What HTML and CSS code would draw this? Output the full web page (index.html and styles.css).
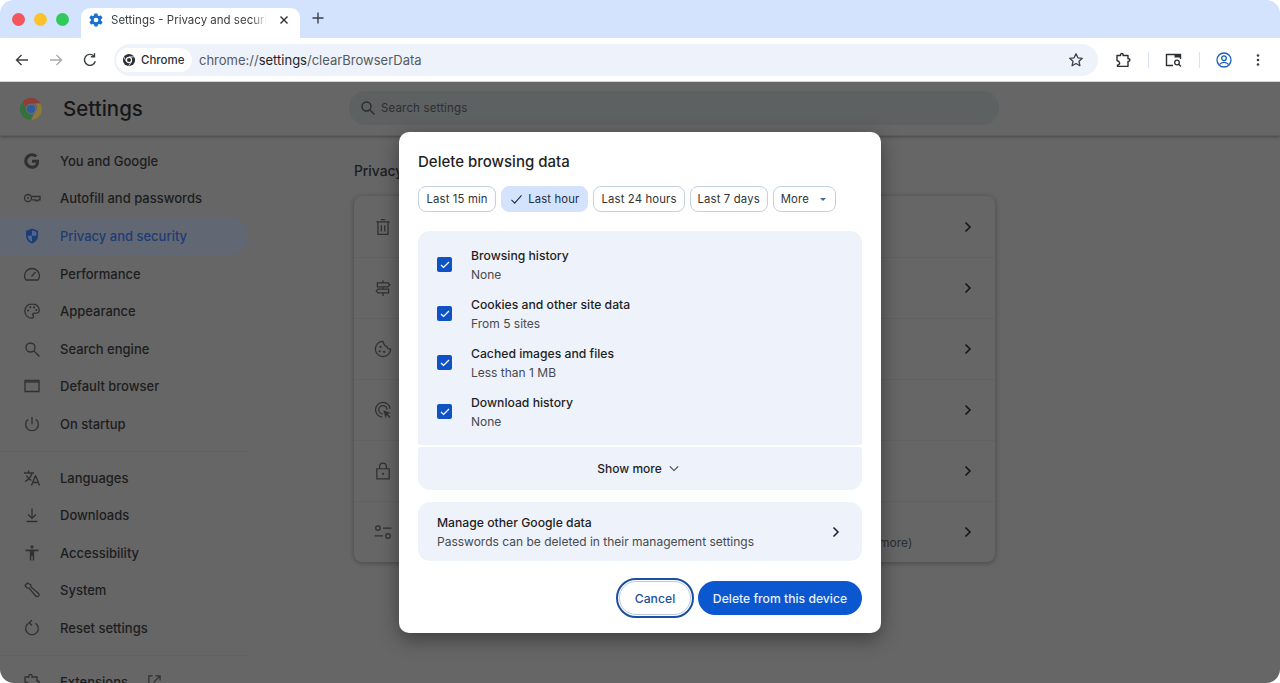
FILE: index.html
```html
<!DOCTYPE html>
<html lang="en">
  <head>
    <meta charset="UTF-8" />
    <title>Settings - Privacy and security</title>
    <link rel="stylesheet" href="styles.css">
  </head>
  <body>
    <div class="window">
      <div class="tabstrip">
        <div class="lights"><i class="red"></i><i class="yellow"></i><i class="green"></i></div>
        <div class="tab">
          <svg class="gear" viewBox="0 0 24 24" width="16" height="16"><path fill="#1a6fd0" d="M19.4 13c.1-.3.1-.7.1-1s0-.7-.1-1l2.1-1.6c.2-.2.2-.4.1-.6l-2-3.5c-.1-.2-.4-.3-.6-.2l-2.5 1c-.5-.4-1.100-.7-1.700-1l-.4-2.600c0-.2-.2-.4-.5-.4h-4c-.2 0-.4.2-.5.400l-.4 2.600c-.6.300-1.200.6-1.700 1l-2.500-1c-.2-.1-.5 0-.6.200l-2 3.500c-.1.200-.1.500.1.600L4.500 11c-.1.300-.1.700-.1 1s0 .7.100 1l-2.100 1.600c-.2.200-.2.400-.1.600l2 3.500c.1.200.4.300.6.200l2.500-1c.5.400 1.100.7 1.700 1l.4 2.600c.1.200.3.400.5.400h4c.3 0 .5-.2.500-.4l.4-2.600c.6-.3 1.200-.6 1.700-1l2.500 1c.2.100.5 0 .6-.2l2-3.500c.1-.2.100-.5-.1-.6zM12 15.500a3.500 3.500 0 1 1 0-7 3.500 3.500 0 0 1 0 7z"/></svg>
          <span class="tab-title">Settings - Privacy and securit</span>
          <svg class="tab-close" viewBox="0 0 10 10" width="10" height="10"><path d="M1.500 1.500l7 7M8.500 1.500l-7 7" stroke="#2b2f33" stroke-width="1.400"/></svg>
        </div>
        <svg class="new-tab" viewBox="0 0 12 12" width="12" height="12"><path d="M6 .5v11M.5 6h11" stroke="#3c4043" stroke-width="1.400"/></svg>
      </div>

      <div class="toolbar">
        <button class="tool"><svg viewBox="0 0 16 16" width="16" height="16"><path d="M14 8H2.500M7.500 3L2.500 8l5 5" fill="none" stroke="#3c4043" stroke-width="1.400"/></svg></button>
        <button class="tool"><svg viewBox="0 0 16 16" width="16" height="16"><path d="M2 8h11.500M8.500 3l5 5-5 5" fill="none" stroke="#a8abae" stroke-width="1.400"/></svg></button>
        <button class="tool"><svg viewBox="0 0 16 16" width="16" height="16"><path d="M13.300 9.300A5.500 5.500 0 1 1 11.900 4M12.500 1.200v3.600H8.900" fill="none" stroke="#3c4043" stroke-width="1.400"/></svg></button>
        <div class="omnibox">
          <div class="chip">
            <svg viewBox="0 0 16 16" width="14" height="14"><circle cx="8" cy="8" r="7" fill="#2b2f33"/><circle cx="8" cy="8" r="3.600" fill="#fff"/><circle cx="8" cy="8" r="2.300" fill="#2b2f33"/><path d="M8 4.400h6.400M5 9.800L1.900 4.200M10.800 10L7.500 15" stroke="#fff" stroke-width=".9"/></svg>
            <span>Chrome</span>
          </div>
          <div class="url">chrome://<b>settings</b>/clearBrowserData</div>
          <svg class="star" viewBox="0 0 16 16" width="16" height="16"><path d="M8 1.800l1.900 4 4.400.5-3.300 3 .9 4.400L8 11.500l-3.900 2.200.9-4.400-3.300-3 4.400-.5z" fill="none" stroke="#3c4043" stroke-width="1.300" stroke-linejoin="round"/></svg>
        </div>
        <div class="actions">
          <svg class="puzzle" viewBox="0 0 16 16" width="16" height="16"><path d="M2 3.500h3.500V2.800a1.300 1.300 0 0 1 2.600 0v.7H13v3.300h.6a1.300 1.300 0 0 1 0 2.600H13v5H2.500v-1.200l1.300-.6c1.100-.9 1.100-2.300 0-3.100L2 8.600z" fill="none" stroke="#2b2f33" stroke-width="1.400" stroke-linejoin="round"/></svg>
          <i class="sep"></i>
          <svg class="tabsearch" viewBox="0 0 18 16" width="18" height="16"><path d="M8 13.500H1.500v-11h14V7" fill="none" stroke="#2b2f33" stroke-width="1.400"/><rect x="9.500" y="2" width="6.500" height="3.500" fill="#2b2f33"/><circle cx="12" cy="10.500" r="2.300" fill="none" stroke="#2b2f33" stroke-width="1.300"/><path d="M13.700 12.300l2.300 2.300" stroke="#2b2f33" stroke-width="1.400"/></svg>
          <i class="sep"></i>
          <svg class="profile" viewBox="0 0 16 16" width="16" height="16"><circle cx="8" cy="8" r="7" fill="none" stroke="#1a5fc0" stroke-width="1.300"/><circle cx="8" cy="6.200" r="2.300" fill="none" stroke="#1a5fc0" stroke-width="1.300"/><path d="M3.500 12.500c1-1.600 2.700-2.200 4.500-2.200s3.500.6 4.500 2.200" fill="none" stroke="#1a5fc0" stroke-width="1.300"/></svg>
          <svg class="dots" viewBox="0 0 4 14" width="4" height="14"><circle cx="2" cy="2.500" r="1.300" fill="#3c4043"/><circle cx="2" cy="7" r="1.300" fill="#3c4043"/><circle cx="2" cy="11.500" r="1.300" fill="#3c4043"/></svg>
        </div>
      </div>

      <div class="page">
        <header class="top">
          <div class="brand">
            <svg viewBox="0 0 22 22" width="22" height="22"><path d="M11 0a11 11 0 0 1 9.500 5.500H11a5.500 5.500 0 0 0-5.100 3.400L2.400 4.100A11 11 0 0 1 11 0z" fill="#8f3d36"/><path d="M20.500 5.500A11 11 0 0 1 11 22l4.600-8A5.500 5.500 0 0 0 15 5.500z" fill="#8c7a3c"/><path d="M2.400 4.100L6.800 12a5 5 0 0 0 5.900 4.300L11 22A11 11 0 0 1 2.400 4.100z" fill="#35703f"/><circle cx="11" cy="11" r="5" fill="#6b6b6b"/><circle cx="11" cy="11" r="4" fill="#2f5a9e"/></svg>
            <h1>Settings</h1>
          </div>
          <div class="search">
            <svg viewBox="0 0 16 16" width="16" height="16"><circle cx="6.500" cy="6.500" r="4.500" fill="none" stroke="#2a2c2e" stroke-width="1.400"/><path d="M10 10l4.500 4.500" stroke="#2a2c2e" stroke-width="1.500"/></svg>
            <span>Search settings</span>
          </div>
        </header>

        <div class="content">
          <nav class="sidebar">
            <a><svg viewBox="0 0 18 18"><path d="M16 9.200c0-.5 0-1-.1-1.500H9v3h4.100c-.4 1.700-1.900 3-4.100 3a4.700 4.700 0 0 1 0-9.400c1.200 0 2.300.4 3.100 1.200l2.200-2.200A7.800 7.800 0 0 0 9 1.200a7.800 7.800 0 1 0 0 15.600c4.300 0 7-3 7-7.600z" fill="#2e3032"/></svg>You and Google</a>
            <a><svg viewBox="0 0 18 18"><circle cx="5" cy="9" r="3.500"/><circle cx="5" cy="9" r=".9" fill="#2e3032"/><path d="M8.500 7.500H17v3.300h-2v1h-2.500v-1H8.500"/></svg>Autofill and passwords</a>
            <a class="on"><svg viewBox="0 0 18 18"><path class="fill" d="M9 1.500l6 2.300v4.600c0 3.800-2.500 6.900-6 8.100-3.500-1.200-6-4.300-6-8.100V3.800z"/><path d="M9 3.200l4.400 1.700v3.900H9zM9 8.800H4.600c.2 2.700 2 5 4.400 6z" fill="#4f6690"/></svg>Privacy and security</a>
            <a><svg viewBox="0 0 18 18"><path d="M3 15h12c1.200-1.500 1.500-2.900 1.500-4.500A7.500 7.500 0 0 0 9 3.500a7.500 7.500 0 0 0-7.500 7c0 1.600.3 3 1.500 4.500z"/><path d="M8.500 11.500l4-4.500"/></svg>Performance</a>
            <a><svg viewBox="0 0 18 18"><path d="M9 1.800a7.200 7.200 0 0 0 0 14.400c1 0 1.500-.7 1.500-1.400 0-1-.8-1.300-.8-2.200 0-.9.700-1.400 1.500-1.400h1.600c2 0 3.400-1.300 3.400-3.200 0-3.700-3.200-6.200-7.200-6.200z"/><g><circle cx="5" cy="8.500" r="1"/><circle cx="7.300" cy="5.300" r="1"/><circle cx="11" cy="5.300" r="1"/><circle cx="13.300" cy="8" r="1"/></g></svg>Appearance</a>
            <a><svg viewBox="0 0 18 18"><circle cx="7.500" cy="7.500" r="4.500"/><path d="M11 11l5.500 5.500"/></svg>Search engine</a>
            <a><svg viewBox="0 0 18 18"><path d="M2 3.500h14v11H2z"/><path d="M2 5h14" stroke-width="2.500"/></svg>Default browser</a>
            <a><svg viewBox="0 0 18 18"><path d="M9 2v7.500M5.300 4.300a6.300 6.300 0 1 0 7.400 0"/></svg>On startup</a>
            <hr>
            <a><svg viewBox="0 0 18 18"><path d="M1 4h10M5.500 1.500V4M9 4c-.8 3.500-3.500 6.800-7 8.500M3.500 6.500c1 2.500 3 4.200 5 5M8.500 16.500l3.700-9.500h.6l3.700 9.500M10 13.500h5"/></svg>Languages</a>
            <a><svg viewBox="0 0 18 18"><path d="M9 2.500v9.500M5 8.500L9 12.300l4-3.800M3.500 15.500h11"/></svg>Downloads</a>
            <a><svg viewBox="0 0 18 18"><circle cx="9" cy="2.800" r="1.600" fill="#2e3032"/><path class="fill" d="M2.500 5.500h13v1.800h-4.300v9.200H9.700v-4.500H8.300v4.500H6.800V7.300H2.500z"/></svg>Accessibility</a>
            <a><svg viewBox="0 0 18 18"><path d="M4.500 2L2 4.500 4 7l2 .2L12.700 15c.8.900 2.100.9 2.800.1.800-.7.700-2-.1-2.800L8 6l-.2-2.200z"/></svg>System</a>
            <a><svg viewBox="0 0 18 18"><path d="M5.500 4.300a6.300 6.300 0 1 0 7 0M9 1L6.200 3.800 9 6.500"/></svg>Reset settings</a>
            <hr>
            <a><svg viewBox="0 0 18 18"><path d="M2 4h4V2.800a1.500 1.500 0 0 1 3 0V4h5v4h.8a1.500 1.500 0 0 1 0 3H14v5H2.500v-3c1.500 0 2.500-.9 2.500-2s-1-2-2.500-2H2z"/></svg>Extensions<svg class="ext" viewBox="0 0 16 16"><path d="M6 2H2v12h12v-4M9 2h5v5M14 2L7 9"/></svg></a>
          </nav>

          <main class="main">
            <h2>Privacy</h2>
            <section class="card">
              <div class="row"><svg viewBox="0 0 16 16"><path d="M3.500 4v10.500h9V4M2 3.500h12M6 1.500h4M6.500 6.500v5.500M9.500 6.500v5.500"/></svg><svg class="go" viewBox="0 0 10 12"><path d="M2.500 1.500L7 6l-4.500 4.500"/></svg></div>
              <div class="row"><svg viewBox="0 0 16 16"><path d="M8 1v2.500M8 7v2M8 12.500V15M3 3.500h9.500L14 5.200l-1.500 1.700H3zM13 9H3.500L2 10.700l1.500 1.700H13z"/></svg><svg class="go" viewBox="0 0 10 12"><path d="M2.500 1.500L7 6l-4.500 4.500"/></svg></div>
              <div class="row"><svg viewBox="0 0 16 16"><path d="M8 1.200a6.800 6.800 0 1 0 6.800 6.800c-1.700.2-3-.7-3.300-2.200C10 5.700 8.700 4 8 1.200z"/><g><circle cx="5.700" cy="6" r="1"/><circle cx="5" cy="10" r="1"/><circle cx="9" cy="10.500" r="1"/></g></svg><svg class="go" viewBox="0 0 10 12"><path d="M2.500 1.500L7 6l-4.500 4.500"/></svg></div>
              <div class="row"><svg viewBox="0 0 16 16"><path d="M7.200 14.400A6.600 6.600 0 1 1 14.500 7M7.800 11.500a3.700 3.700 0 1 1 3.800-3.800"/><path class="fill" d="M8 8l7.500 2.600-3 1.200 2.400 2.500-1 1-2.500-2.500-1.100 3z"/></svg><svg class="go" viewBox="0 0 10 12"><path d="M2.500 1.500L7 6l-4.500 4.500"/></svg></div>
              <div class="row"><svg viewBox="0 0 16 16"><path d="M2.500 6h11v9h-11zM5 6V4a3 3 0 0 1 6 0v2"/><circle cx="8" cy="10.500" r="1" fill="#2e3032"/></svg><svg class="go" viewBox="0 0 10 12"><path d="M2.500 1.500L7 6l-4.500 4.500"/></svg></div>
              <div class="row"><svg viewBox="0 0 16 16"><circle cx="3.500" cy="4.500" r="2"/><path d="M8 4.500h7.500M.5 11.500H8"/><circle cx="12.500" cy="11.500" r="2"/></svg><span class="more">more)</span><svg class="go" viewBox="0 0 10 12"><path d="M2.500 1.500L7 6l-4.500 4.500"/></svg></div>
            </section>
          </main>
        </div>

        <div class="dialog">
          <h3>Delete browsing data</h3>
          <div class="chips">
            <span>Last 15 min</span>
            <span class="picked"><svg viewBox="0 0 14 12" width="13" height="11"><path d="M1.500 6.500l3.500 3.500 7.500-8.500" fill="none" stroke="#1f2b3d" stroke-width="1.200"/></svg>Last hour</span>
            <span>Last 24 hours</span>
            <span>Last 7 days</span>
            <span class="drop">More<i></i></span>
          </div>
          <div class="types">
            <label class="type"><b class="box"><svg viewBox="0 0 12 10" width="10" height="8"><path d="M1 5l3.200 3L11 1.200" fill="none" stroke="#fff" stroke-width="1.600"/></svg></b><span><strong>Browsing history</strong><small>None</small></span></label>
            <label class="type"><b class="box"><svg viewBox="0 0 12 10" width="10" height="8"><path d="M1 5l3.200 3L11 1.200" fill="none" stroke="#fff" stroke-width="1.600"/></svg></b><span><strong>Cookies and other site data</strong><small>From 5 sites</small></span></label>
            <label class="type"><b class="box"><svg viewBox="0 0 12 10" width="10" height="8"><path d="M1 5l3.200 3L11 1.200" fill="none" stroke="#fff" stroke-width="1.600"/></svg></b><span><strong>Cached images and files</strong><small>Less than 1 MB</small></span></label>
            <label class="type"><b class="box"><svg viewBox="0 0 12 10" width="10" height="8"><path d="M1 5l3.200 3L11 1.200" fill="none" stroke="#fff" stroke-width="1.600"/></svg></b><span><strong>Download history</strong><small>None</small></span></label>
          </div>
          <div class="show-more">Show more<svg viewBox="0 0 12 8" width="10" height="7"><path d="M1 1.500l5 5 5-5" fill="none" stroke="#3c4043" stroke-width="1.300"/></svg></div>
          <div class="manage">
            <span><strong>Manage other Google data</strong><small>Passwords can be deleted in their management settings</small></span>
            <svg viewBox="0 0 10 12" width="10" height="12"><path d="M2.500 1.500L7 6l-4.500 4.500" fill="none" stroke="#1f1f1f" stroke-width="1.500"/></svg>
          </div>
          <div class="buttons">
            <button class="cancel">Cancel</button>
            <button class="confirm">Delete from this device</button>
          </div>
        </div>
      </div>
    </div>
  </body>
</html>
```

FILE: styles.css
```css
* {
  box-sizing: border-box;
}
html, body {
  margin: 0;
  height: 683px;
  overflow: hidden;
  background: #fff;
}
body {
  font-family: Inter, "Liberation Sans", sans-serif;
  color: #1f1f1f;
}
svg {
  display: block;
  flex-shrink: 0;
}

.window {
  height: 683px;
  display: flex;
  flex-direction: column;
}

/* Barra de pestañas */
.tabstrip {
  height: 38px;
  flex-shrink: 0;
  display: flex;
  align-items: flex-end;
  background: #d3e3fd;
  border-radius: 14px 14px 0 0;
  padding-left: 12px;
}
.lights {
  display: flex;
  gap: 9px;
  align-self: flex-start;
  padding-top: 13px;
  width: 69px;
}
.lights i {
  width: 13px;
  height: 13px;
  border-radius: 50%;
}
.lights .red { background: #f4565c; }
.lights .yellow { background: #fcc32b; }
.lights .green { background: #31c85c; }
.tab {
  width: 219px;
  height: 31px;
  margin-bottom: -1px;
  padding: 0 11px 8px 7px;
  display: flex;
  align-items: center;
  background: #fff;
  border-radius: 9px 9px 0 0;
}
.tab-title {
  flex: 1;
  margin-left: 7px;
  font-size: 11.500px;
  color: #3c4043;
  white-space: nowrap;
  overflow: hidden;
  -webkit-mask-image: linear-gradient(90deg, #000 90%, transparent 100%);
  mask-image: linear-gradient(90deg, #000 90%, transparent 100%);
}
.tab-close {
  margin-left: 12px;
}
.new-tab {
  margin: 0 0 14px 12px;
}

/* Barra de herramientas */
.toolbar {
  height: 44px;
  flex-shrink: 0;
  display: flex;
  align-items: center;
  padding: 0 14px;
  background: #fff;
  border-bottom: 1px solid #d2d3d5;
  border-radius: 10px 10px 0 0;
}
.tool {
  width: 34px;
  height: 30px;
  padding: 0;
  display: flex;
  align-items: center;
  justify-content: flex-start;
  background: none;
  border: 0;
}
.omnibox {
  width: 984px;
  height: 32px;
  flex-shrink: 0;
  margin-left: -2px;
  padding: 0 14px 0 2px;
  display: flex;
  align-items: center;
  background: #edf2fb;
  border-radius: 16px;
}
.chip {
  height: 24px;
  width: 76px;
  padding-left: 6px;
  display: flex;
  align-items: center;
  gap: 5px;
  font-size: 11.500px;
  font-weight: 500;
  color: #2b2f33;
  background: #fff;
  border-radius: 12px;
}
.url {
  flex: 1;
  margin-left: 7px;
  font-size: 13px;
  color: #555a60;
}
.url b {
  font-weight: 400;
  color: #1f1f1f;
}
.actions {
  display: flex;
  align-items: center;
  margin-left: 17px;
}
.actions .puzzle {
  margin-right: 17px;
}
.actions .tabsearch {
  margin: 0 16px;
}
.actions .sep {
  width: 1px;
  height: 16px;
  background: #d3e3fd;
}
.actions .profile {
  margin-left: 16px;
}
.actions .dots {
  margin-left: 24px;
}

/* Página de ajustes, ya oscurecida por el diálogo */
.page {
  flex: 1;
  position: relative;
  overflow: hidden;
  display: flex;
  flex-direction: column;
  background: #666;
  border-radius: 0 0 14px 14px;
}
.top {
  height: 54px;
  flex-shrink: 0;
  display: flex;
  align-items: center;
  padding-left: 20px;
  box-shadow: 0 1px 3px rgba(0, 0, 0, .3);
  border-bottom: 1px solid #5d5d5d;
}
.brand {
  width: 329px;
  display: flex;
  align-items: center;
  gap: 21px;
}
.brand h1 {
  margin: 0;
  font-size: 20.500px;
  font-weight: 500;
  color: #161616;
}
.search {
  width: 650px;
  height: 34px;
  margin-top: -1px;
  padding-left: 11px;
  display: flex;
  align-items: center;
  gap: 5px;
  font-size: 11.500px;
  letter-spacing: .150px;
  color: #2c2e30;
  background: #5e6162;
  border-radius: 17px;
}

.content {
  flex: 1;
  display: flex;
}
.sidebar {
  width: 248px;
  flex-shrink: 0;
  padding-top: 6px;
}
.sidebar a {
  height: 37.600px;
  padding-left: 23px;
  display: flex;
  align-items: center;
  gap: 19px;
  font-size: 13px;
  font-weight: 450;
  color: #1c1d1e;
  white-space: nowrap;
}
.sidebar a > svg {
  width: 18px;
  height: 18px;
}
.sidebar svg path, .sidebar svg circle {
  fill: none;
  stroke: #2e3032;
  stroke-width: 1.300;
}
.sidebar svg g circle, .sidebar svg circle[fill], .sidebar svg path[fill], .sidebar svg path.fill {
  fill: #2e3032;
  stroke: none;
}
.sidebar a.on {
  color: #1d3c74;
  background: #626873;
  border-radius: 0 18px 18px 0;
}
.sidebar a.on svg path.fill {
  fill: #1d3c74;
}
.sidebar a.on svg path[fill] {
  fill: #4f6690;
}
.sidebar hr {
  height: 1px;
  margin: 8px 0 7px;
  border: 0;
  background: #616161;
}
.sidebar .ext {
  width: 15px;
  height: 15px;
}

.main {
  margin-left: 106px;
  width: 641px;
}
.main h2 {
  margin: 27px 0 16px;
  font-size: 13.800px;
  font-weight: 450;
  line-height: 17px;
  color: #1c1d1e;
}
.card {
  background: #666;
  border-radius: 8px;
  box-shadow: 0 1px 4px 1px rgba(0, 0, 0, .22);
}
.row {
  height: 61px;
  padding: 0 22px 0 20px;
  display: flex;
  align-items: center;
  border-top: 1px solid #616161;
  position: relative;
}
.row:first-child {
  border-top: 0;
}
.row svg {
  width: 18px;
  height: 18px;
}
.row svg path, .row svg circle {
  fill: none;
  stroke: #2e3032;
  stroke-width: 1.100;
}
.row svg circle[fill], .row svg g circle {
  fill: #2e3032;
  stroke: none;
}
.row svg path.fill {
  fill: #2e3032;
  stroke: #666;
  stroke-width: .500;
}
.row .go {
  width: 10px;
  height: 12px;
  margin-left: auto;
}
.row .go path {
  stroke: #141414;
  stroke-width: 1.500;
}
.more {
  position: absolute;
  left: 525px;
  top: 33px;
  font-size: 12px;
  color: #2c2e30;
}

/* Diálogo */
.dialog {
  position: absolute;
  left: 399px;
  top: 50px;
  width: 482px;
  height: 501px;
  padding: 20px 19px 0;
  background: #fff;
  border-radius: 10px;
  box-shadow: 0 6px 20px rgba(0, 0, 0, .4);
}
.dialog h3 {
  margin: 0;
  font-size: 15px;
  font-weight: 500;
  line-height: 19px;
  color: #1f1f1f;
}
.chips {
  display: flex;
  gap: 5px;
  margin-top: 15px;
}
.chips span {
  height: 26px;
  padding: 0 7px;
  display: flex;
  align-items: center;
  font-size: 11.300px;
  letter-spacing: .150px;
  color: #303235;
  border: 1px solid #c4d0e0;
  border-radius: 8px;
  white-space: nowrap;
}
.chips span:first-child {
  padding: 0 7.500px;
}
.chips .picked {
  padding: 0 8px;
  gap: 5px;
  color: #1f2b3d;
  background: #d3e3fd;
  border-color: #d3e3fd;
}
.chips .drop i {
  width: 0;
  height: 0;
  margin-left: 11px;
  margin-right: 2px;
  border: 3.500px solid transparent;
  border-top: 3.500px solid #4565a8;
  border-bottom: 0;
}
.types {
  height: 214px;
  margin-top: 19px;
  padding-top: 9px;
  background: #eef2fb;
  border-radius: 12px 12px 3px 3px;
}
.type {
  height: 49px;
  padding-left: 19px;
  display: flex;
  align-items: center;
  gap: 19px;
}
.box {
  width: 15px;
  height: 15px;
  display: flex;
  align-items: center;
  justify-content: center;
  background: #0e52c4;
  border-radius: 2px;
}
.dialog strong, .dialog small {
  display: block;
  line-height: 19px;
}
.dialog strong {
  font-size: 12.200px;
  font-weight: 500;
  color: #1f1f1f;
}
.dialog small {
  font-size: 12px;
  font-weight: 400;
  color: #474a4e;
}
.show-more {
  height: 43px;
  margin-top: 2px;
  padding-right: 4px;
  display: flex;
  align-items: center;
  justify-content: center;
  gap: 7px;
  font-size: 12px;
  font-weight: 500;
  background: #eef2fb;
  border-radius: 3px 3px 12px 12px;
}
.manage {
  height: 59px;
  margin-top: 12px;
  padding: 0 21px 0 19px;
  display: flex;
  align-items: center;
  justify-content: space-between;
  background: #eef2fb;
  border-radius: 12px;
}
.buttons {
  display: flex;
  justify-content: flex-end;
  gap: 7px;
  margin-top: 20px;
}
.buttons button {
  height: 34px;
  font-family: inherit;
  font-size: 12.200px;
  font-weight: 500;
  border-radius: 17px;
}
.cancel {
  width: 72px;
  color: #1b4f9f;
  background: #fff;
  border: 1px solid #b9cbe4;
  outline: 2px solid #1b4f9f;
  outline-offset: 1px;
}
.confirm {
  width: 164px;
  color: #e8f0fe;
  background: #0b57d0;
  border: 0;
}
```
